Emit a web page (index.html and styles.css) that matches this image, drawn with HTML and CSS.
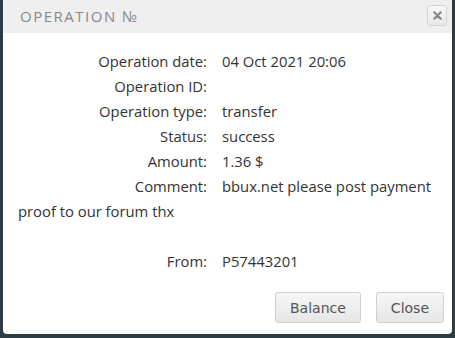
FILE: index.html
```html
<!DOCTYPE html>
<html lang="en">

<head>
    <meta charset="UTF-8">
    <meta name="viewport" content="width=device-width, initial-scale=1.0">
    <title>Operation</title>
    <link rel="stylesheet" href="styles.css">
</head>

<body>
    <div class="dialog">
        <div class="dialog-header">
            <span class="dialog-title">Operation №</span>
            <button class="dialog-close" title="Close">
                <svg width="9" height="9" viewBox="0 0 9 9"><path d="M1.3 1.3 7.7 7.7M7.7 1.3 1.3 7.7" stroke="#858585" stroke-width="2.2" stroke-linecap="round"/></svg>
            </button>
        </div>
        <div class="dialog-body">
            <div class="row"><span class="label">Operation date:</span>04 Oct 2021 20:06</div>
            <div class="row"><span class="label">Operation ID:</span></div>
            <div class="row"><span class="label">Operation type:</span>transfer</div>
            <div class="row"><span class="label">Status:</span>success</div>
            <div class="row"><span class="label">Amount:</span>1.36 $</div>
            <div class="row"><span class="label">Comment:</span>bbux.net please post payment proof to our forum thx<br><br></div>
            <div class="row"><span class="label">From:</span>P57443201</div>
        </div>
        <div class="dialog-footer">
            <button class="btn">Balance</button>
            <button class="btn">Close</button>
        </div>
    </div>
</body>

</html>
```

FILE: styles.css
```css
body {
    margin: 0;
    padding: 0;
    background-color: #2e3b42;
    font-family: "Open Sans", Arial, sans-serif;
}

.dialog {
    margin: 0 3px 0 3px;
    height: 334px;
    background-color: white;
    border-radius: 0 0 4px 4px;
    display: flex;
    flex-direction: column;
}

.dialog-header {
    height: 33px;
    background-color: #efefef;
    display: flex;
    align-items: center;
    justify-content: space-between;
    padding: 0 5px 0 17px;
}

.dialog-title {
    text-transform: uppercase;
    letter-spacing: 1.5px;
    color: #888;
    font-size: 15px;
    margin-top: -2px;
}

.dialog-close {
    width: 20px;
    height: 21px;
    padding: 0;
    border: 1px solid #d3d3d3;
    border-radius: 3px;
    background: linear-gradient(#f8f8f8, #e8e8e8);
    display: flex;
    align-items: center;
    justify-content: center;
    margin-top: -3px;
}

.dialog-body {
    padding: 16px 15px 0 15px;
    font-size: 14.8px;
    line-height: 25px;
    color: #333;
}

.label {
    display: inline-block;
    width: 189px;
    text-align: right;
    padding-right: 15px;
}

.dialog-footer {
    margin-top: auto;
    display: flex;
    justify-content: flex-end;
    gap: 15px;
    padding: 0 8px 11px 0;
}

.btn {
    height: 31px;
    padding: 0 14px;
    border: 1px solid #d0d0d0;
    border-radius: 3px;
    background: linear-gradient(#f6f6f6, #e6e6e6);
    color: #555;
    font-family: "DejaVu Sans", Verdana, sans-serif;
    font-size: 14px;
}
```
